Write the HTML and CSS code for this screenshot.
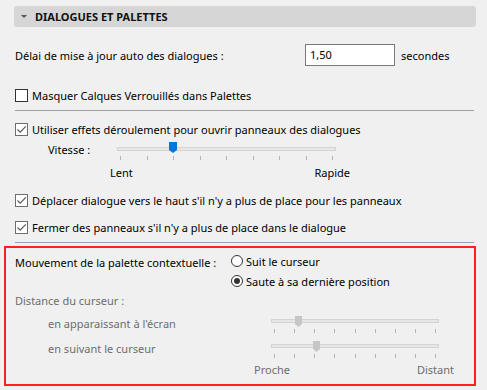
FILE: index.html
```html
<!DOCTYPE html>
<html lang="fr">
<head>
    <meta charset="UTF-8">
    <title>Dialogues et palettes</title>
    <link rel="stylesheet" href="styles.css">
</head>
<body>
    <div class="header">
        <span class="caret"></span>
        <span class="header-title">DIALOGUES ET PALETTES</span>
    </div>

    <div class="row delay-row">
        <span class="delay-label">Délai de mise à jour auto des dialogues :</span>
        <div class="field">1,50</div>
        <span class="unit">secondes</span>
    </div>

    <label class="check check-masquer">
        <span class="box"></span>
        <span>Masquer Calques Verrouillés dans Palettes</span>
    </label>

    <div class="separator sep-1"></div>

    <label class="check check-utiliser">
        <span class="box checked">
            <svg width="11" height="11" viewBox="0 0 11 11"><path d="M1.5 5.5 L4.2 8.2 L9.8 2.4" fill="none" stroke="#5a5a5a" stroke-width="1.2"/></svg>
        </span>
        <span>Utiliser effets déroulement pour ouvrir panneaux des dialogues</span>
    </label>

    <div class="speed-row">
        <span class="speed-label">Vitesse :</span>
        <div class="slider slider-speed">
            <div class="track"></div>
            <div class="thumb" style="left: 52px"></div>
            <div class="ticks">
                <i></i><i></i><i></i><i></i><i></i><i></i><i></i><i></i><i></i>
            </div>
        </div>
    </div>
    <div class="scale-labels speed-labels">
        <span>Lent</span>
        <span>Rapide</span>
    </div>

    <label class="check check-deplacer">
        <span class="box checked">
            <svg width="11" height="11" viewBox="0 0 11 11"><path d="M1.5 5.5 L4.2 8.2 L9.8 2.4" fill="none" stroke="#5a5a5a" stroke-width="1.2"/></svg>
        </span>
        <span>Déplacer dialogue vers le haut s'il n'y a plus de place pour les panneaux</span>
    </label>

    <label class="check check-fermer">
        <span class="box checked">
            <svg width="11" height="11" viewBox="0 0 11 11"><path d="M1.5 5.5 L4.2 8.2 L9.8 2.4" fill="none" stroke="#5a5a5a" stroke-width="1.2"/></svg>
        </span>
        <span>Fermer des panneaux s'il n'y a plus de place dans le dialogue</span>
    </label>

    <div class="separator sep-2"></div>

    <div class="highlight">
        <div class="move-row">
            <span class="move-label">Mouvement de la palette contextuelle :</span>
            <div class="radios">
                <label class="radio"><span class="dot"></span><span>Suit le curseur</span></label>
                <label class="radio"><span class="dot on"></span><span>Saute à sa dernière position</span></label>
            </div>
        </div>

        <div class="muted distance-title">Distance du curseur :</div>

        <div class="dist-row dist-row-1">
            <span class="muted dist-label">en apparaissant à l'écran</span>
            <div class="slider slider-gray">
                <div class="track"></div>
                <div class="thumb" style="left: 24px"></div>
                <div class="ticks">
                    <i></i><i></i><i></i><i></i><i></i><i></i><i></i><i></i><i></i>
                </div>
            </div>
        </div>
        <div class="dist-row dist-row-2">
            <span class="muted dist-label">en suivant le curseur</span>
            <div class="slider slider-gray">
                <div class="track"></div>
                <div class="thumb" style="left: 42px"></div>
                <div class="ticks">
                    <i></i><i></i><i></i><i></i><i></i><i></i><i></i><i></i><i></i>
                </div>
            </div>
        </div>
        <div class="scale-labels muted dist-labels">
            <span>Proche</span>
            <span>Distant</span>
        </div>
    </div>
</body>
</html>
```

FILE: styles.css
```css
html, body {
    margin: 0;
    background: #f0f0f0;
    font-family: "Noto Sans", "Open Sans", sans-serif;
    font-size: 11px;
    color: #000;
}
body {
    padding-top: 6px;
    width: 487px;
    height: 390px;
    overflow: hidden;
}

/* bandeau de section */
.header {
    display: flex;
    align-items: center;
    height: 21px;
    margin: 0 11px 0 14px;
    background: #d6d6d6;
    border-radius: 3px;
}
.caret {
    width: 0;
    height: 0;
    margin: 0 8px 0 7px;
    border-left: 3px solid transparent;
    border-right: 3px solid transparent;
    border-top: 3px solid #555;
}
.header-title {
    font-weight: 700;
    font-size: 11px;
    color: #111;
}

/* ligne délai */
.row {
    display: flex;
    align-items: center;
}
.delay-row {
    height: 22px;
    margin-top: 17px;
    padding-left: 15px;
}
.delay-label {
    width: 290px;
}
.field {
    width: 90px;
    height: 22px;
    box-sizing: border-box;
    border: 1px solid #7a7a7a;
    background: #fff;
    padding-left: 4px;
    line-height: 20px;
}
.unit {
    margin-left: 6px;
}

/* cases à cocher */
.check {
    display: flex;
    align-items: center;
    height: 20px;
    padding-left: 15px;
}
.box {
    width: 13px;
    height: 13px;
    box-sizing: border-box;
    border: 1px solid #333;
    background: #fff;
    margin-right: 4px;
    display: flex;
    align-items: center;
    justify-content: center;
}
.box.checked {
    border-color: #6d6d6d;
}
.check-masquer { margin-top: 19px; }
.check-utiliser { margin-top: 8px; }
.check-deplacer { margin-top: 9px; }
.check-fermer { margin-top: 7px; }

.separator {
    height: 1px;
    background: #a0a0a0;
    margin: 5px 13px 0 15px;
}

/* curseurs */
.slider {
    position: relative;
    height: 20px;
}
.track {
    position: absolute;
    left: 0;
    right: 0;
    height: 4px;
    box-sizing: border-box;
    border: 1px solid #d4d4d4;
    background: #e7e7e7;
}
.thumb {
    position: absolute;
    top: 0;
    clip-path: polygon(0 0, 100% 0, 100% 72%, 50% 100%, 0 72%);
}
.ticks {
    position: absolute;
    left: 3px;
    right: 3px;
    height: 4px;
    display: flex;
    justify-content: space-between;
}
.ticks i {
    width: 1px;
    background: #b4b4b4;
}

.speed-row {
    display: flex;
    align-items: flex-start;
    margin-top: 3px;
    padding-left: 48px;
}
.speed-label {
    width: 69px;
    line-height: 16px;
}
.slider-speed {
    width: 219px;
}
.slider-speed .track { top: 5px; }
.slider-speed .thumb {
    width: 8px;
    height: 11px;
    background: #0078d7;
}
.slider-speed .ticks { top: 14px; }

.scale-labels {
    display: flex;
    justify-content: space-between;
    line-height: 16px;
}
.speed-labels {
    width: 240px;
    margin: 3px 0 0 110px;
}

/* zone encadrée */
.highlight {
    height: 140px;
    box-sizing: border-box;
    margin: 3px 11px 0 4px;
    border: 2px solid #ff1f1f;
}
.muted {
    color: #6d6d6d;
}
.move-row {
    display: flex;
    margin-top: 3px;
    padding-left: 9px;
}
.move-label {
    width: 216px;
    line-height: 20px;
    padding-top: 2px;
}
.radio {
    display: flex;
    align-items: center;
    height: 20px;
}
.dot {
    width: 12px;
    height: 12px;
    box-sizing: border-box;
    border: 1px solid #333;
    border-radius: 50%;
    background: #fff;
    margin-right: 3px;
    display: flex;
    align-items: center;
    justify-content: center;
}
.dot.on::after {
    content: "";
    width: 6px;
    height: 6px;
    border-radius: 50%;
    background: #333;
}
.distance-title {
    margin-top: 2px;
    padding-left: 9px;
    line-height: 16px;
}
.dist-row {
    display: flex;
    align-items: flex-start;
    padding-left: 42px;
}
.dist-row-1 { margin-top: 7px; }
.dist-row-2 { margin-top: 5px; }
.dist-label {
    width: 223px;
    line-height: 16px;
}
.slider-gray {
    width: 168px;
}
.slider-gray .track { top: 3px; }
.slider-gray .thumb {
    width: 7px;
    height: 11px;
    background: #c6c6c6;
}
.slider-gray .ticks { top: 13px; }
.dist-labels {
    width: 200px;
    margin: 1px 0 0 248px;
}
```
